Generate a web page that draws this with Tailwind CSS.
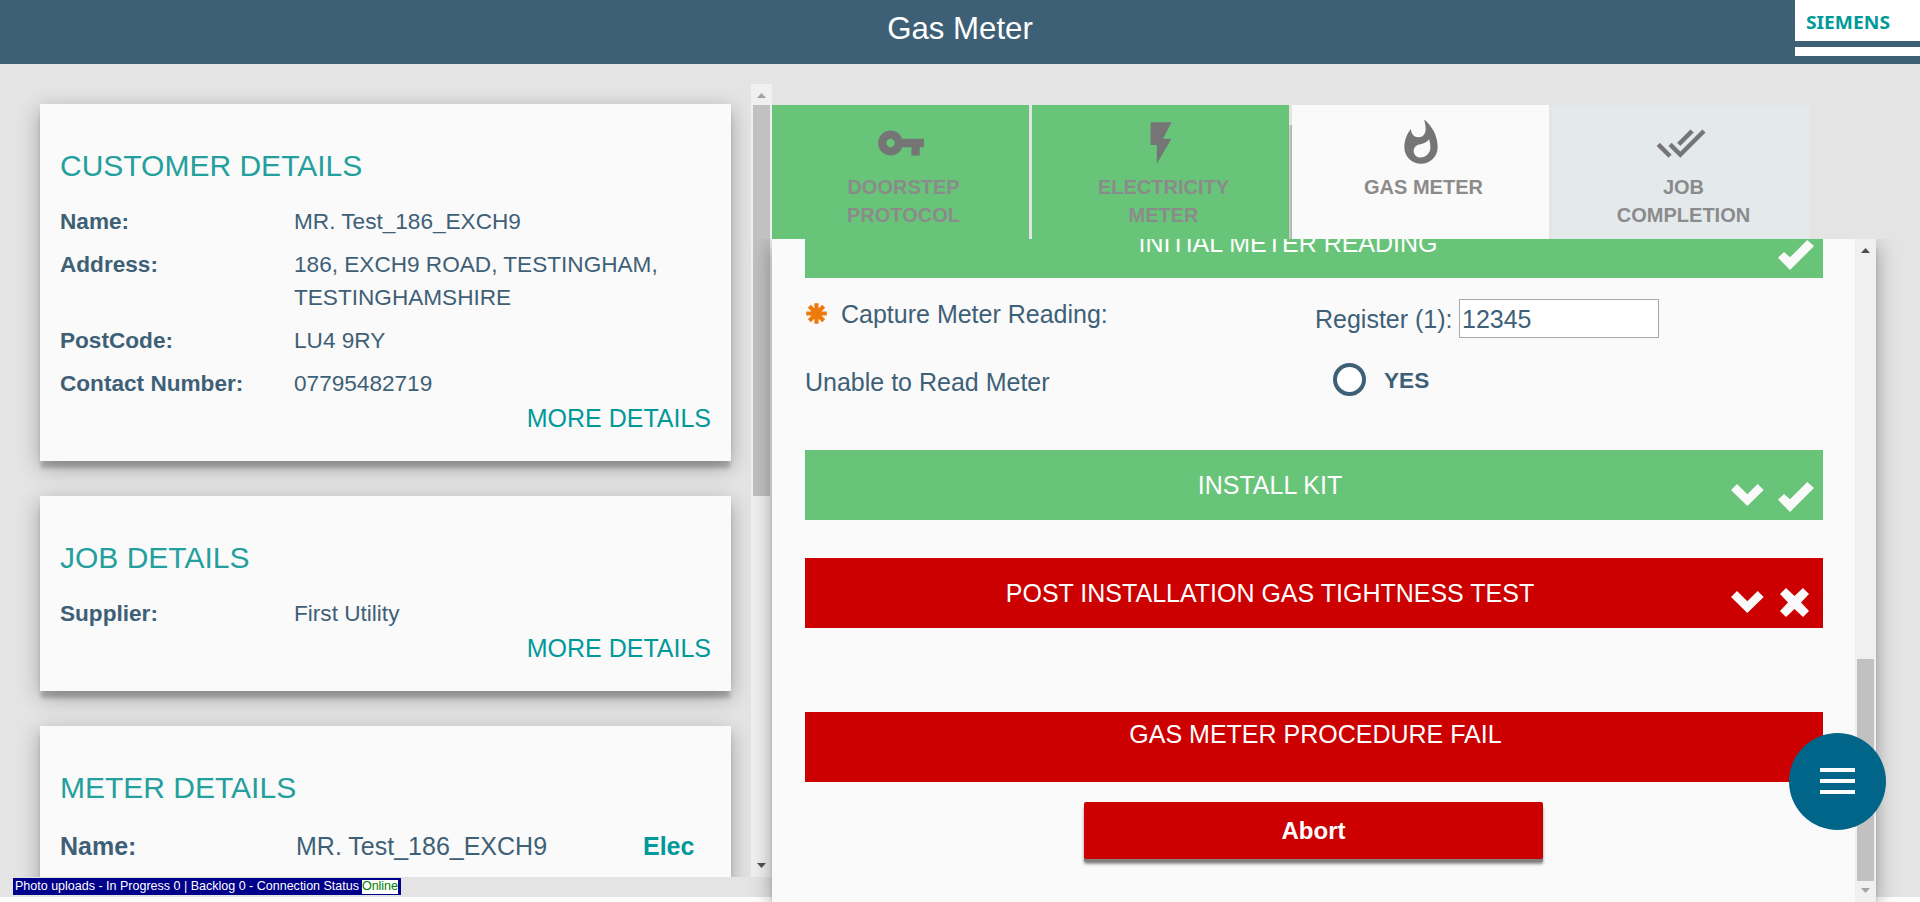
<!DOCTYPE html>
<html lang="en">
<head>
<meta charset="utf-8">
<title>Gas Meter</title>
<script src="https://cdn.jsdelivr.net/npm/@tailwindcss/browser@4"></script>
</head>
<body class="bg-white">
<svg class="hidden">
  <symbol id="check" viewBox="0 0 36 30"><path fill="#fafafa" d="M0 17.7 6 12l6 5.3L29.3 0 36 6 12 30z"/></symbol>
  <symbol id="chevron" viewBox="0 0 33 22"><path fill="#fafafa" d="M0 6 6 0l10.3 10.3L26.7 0l6 6-16.4 16z"/></symbol>
  <symbol id="cross" viewBox="0 0 29 29"><path fill="#fafafa" d="M0 6 6 0l8.500 8L23 0l6 6-8 8.500L29 23l-6 6-8.500-8L6 29l-6-6 8-8.500z"/></symbol>
</svg>
<div class="relative flex h-[902px] w-[1920px] flex-col overflow-hidden font-['Liberation_Sans',Arial,sans-serif] text-[25px] leading-9 text-[#3e6077]">
  <header class="relative h-16 shrink-0 bg-[#3e6077] pt-[6px] text-center text-[31.2px] leading-[46px] text-white">
    Gas Meter
    <div class="absolute top-0 right-0 flex h-14 w-[125px] flex-col bg-white">
      <svg class="h-[41px] w-[125px]" viewBox="0 0 125 41"><text x="11" y="28.5" textLength="84" lengthAdjust="spacingAndGlyphs" font-family="Noto Sans, sans-serif" font-weight="700" font-size="18" fill="#099">SIEMENS</text></svg>
      <div class="h-[6px] bg-[#3e6077]"></div>
    </div>
  </header>

  <main class="flex h-[833px] shrink-0 bg-[#e4e4e4]">
    <div class="w-[772px] shrink-0 pt-5">
      <div class="flex h-[793px] overflow-hidden">
        <div class="flex w-[751px] flex-col gap-[35px] pt-5 pr-5 pl-10">
          <section class="h-[357px] shrink-0 bg-[#fafafa] px-5 pt-[43px] shadow-[0_8px_4px_-1px_rgba(0,0,0,0.2),0_6px_20px_rgba(0,0,0,0.3)]">
            <h2 class="mb-[22px] h-[37px] text-[30px] leading-[37px] text-[#23a09d]">CUSTOMER DETAILS</h2>
            <dl class="grid grid-cols-[234px_1fr] gap-y-[10.8px] text-[22.6px] leading-[32.4px]">
              <dt class="font-bold">Name:</dt><dd>MR. Test_186_EXCH9</dd>
              <dt class="font-bold">Address:</dt><dd>186, EXCH9 ROAD, TESTINGHAM,<br>TESTINGHAMSHIRE</dd>
              <dt class="font-bold">PostCode:</dt><dd>LU4 9RY</dd>
              <dt class="font-bold">Contact Number:</dt><dd>07795482719</dd>
            </dl>
            <div class="-mt-[0.6px] text-right text-[#099]">MORE DETAILS</div>
          </section>
          <section class="h-[195px] shrink-0 bg-[#fafafa] px-5 pt-[43px] shadow-[0_8px_4px_-1px_rgba(0,0,0,0.2),0_6px_20px_rgba(0,0,0,0.3)]">
            <h2 class="mb-[22px] h-[37px] text-[30px] leading-[37px] text-[#23a09d]">JOB DETAILS</h2>
            <dl class="grid grid-cols-[234px_1fr] text-[22.6px] leading-[32.4px]">
              <dt class="font-bold">Supplier:</dt><dd>First Utility</dd>
            </dl>
            <div class="text-right text-[#099]">MORE DETAILS</div>
          </section>
          <section class="h-[357px] shrink-0 bg-[#fafafa] px-5 pt-[43px] shadow-[0_8px_4px_-1px_rgba(0,0,0,0.2),0_6px_20px_rgba(0,0,0,0.3)]">
            <h2 class="mb-[22px] h-[37px] text-[30px] leading-[37px] text-[#23a09d]">METER DETAILS</h2>
            <div class="grid grid-cols-[236px_347px_1fr]">
              <b>Name:</b><span>MR. Test_186_EXCH9</span><b class="text-[#099]">Elec</b>
            </div>
          </section>
        </div>
        <div class="flex w-[21px] flex-col items-center bg-[#f0f0f0]">
          <svg class="h-[21px] w-[21px]" viewBox="0 0 21 21"><path fill="#a3a3a3" d="M6 14h9l-4.500-5z"/></svg>
          <div class="h-[391px] w-[17px] bg-[#c1c1c1]"></div>
          <svg class="mt-auto h-[21px] w-[21px]" viewBox="0 0 21 21"><path fill="#505050" d="M6 7h9l-4.500 5z"/></svg>
        </div>
      </div>
      <div class="mt-px ml-[13px] flex h-[17px] w-[388px] items-center bg-[#00008b] pl-[2px] text-[12.6px] leading-[17px] whitespace-nowrap text-white">
        <svg class="h-[17px] w-[347px]"><text x="0" y="12" textLength="344" lengthAdjust="spacingAndGlyphs" fill="#fff">Photo uploads - In Progress 0 | Backlog 0 - Connection Status</text></svg>
        <span class="h-[14px] w-[36px] bg-white text-[12.6px] leading-[13px] tracking-[-0.1px] text-[green]">Online</span>
      </div>
    </div>

    <div class="w-[1104px] shrink-0 pt-[41px]">
      <nav class="flex gap-[3px] text-[20px] leading-7 font-bold text-[#8b8b8b]">
        <div class="flex h-[134px] w-[257px] flex-col items-center bg-[#67c479] pt-[13px]">
          <svg class="h-[50px] w-[50px]" viewBox="0 0 24 24"><path fill="#757575" d="M12.650 10A5.990 5.990 0 0 0 7 6c-3.310 0-6 2.690-6 6s2.690 6 6 6a5.990 5.990 0 0 0 5.650-4H17v4h4v-4h2v-4H12.650zM7 14a2 2 0 1 1 0-4 2 2 0 0 1 0 4z"/></svg>
          <div class="mt-[5px] pl-[6px] text-center">DOORSTEP<br>PROTOCOL</div>
        </div>
        <div class="flex h-[134px] w-[257px] flex-col items-center bg-[#67c479] pt-[13px]">
          <svg class="h-[50px] w-[50px]" viewBox="0 0 24 24"><path fill="#757575" d="M7 2v11h3v9l7-12h-4l4-8z"/></svg>
          <div class="mt-[5px] pl-[6px] text-center">ELECTRICITY<br>METER</div>
        </div>
        <div class="relative flex h-[134px] w-[257px] flex-col items-center bg-[#fafafa] pt-[13px]">
          <div class="absolute top-5 bottom-0 -left-[4px] w-[4px] bg-linear-to-l from-black/25 to-transparent"></div>
          <svg class="h-[50px] w-[50px]" viewBox="0 0 24 24"><path fill="#757575" d="M13.500.67s.74 2.650.74 4.800c0 2.060-1.350 3.730-3.410 3.730-2.070 0-3.630-1.670-3.630-3.730l.03-.36C5.210 7.510 4 10.620 4 14c0 4.420 3.580 8 8 8s8-3.580 8-8C20 8.610 17.410 3.800 13.500.67zM11.710 19c-1.780 0-3.220-1.400-3.220-3.140 0-1.620 1.050-2.760 2.810-3.120 1.770-.36 3.600-1.210 4.620-2.580.39 1.290.59 2.650.59 4.040 0 2.650-2.150 4.800-4.800 4.800z"/></svg>
          <div class="mt-[5px] pl-[6px] text-center">GAS METER</div>
        </div>
        <div class="flex h-[134px] w-[257px] flex-col items-center bg-[#e4eaec] pt-[13px]">
          <svg class="h-[50px] w-[50px]" viewBox="0 0 24 24"><path fill="#757575" stroke="#757575" stroke-width=".2" d="M18 7l-1.410-1.410-6.340 6.340 1.410 1.410L18 7zm4.240-1.410L11.660 16.170 7.480 12l-1.410 1.410L11.660 19l12-12-1.420-1.410zM.41 13.410L6 19l1.410-1.410L1.830 12 .41 13.410z"/></svg>
          <div class="mt-[5px] pl-[6px] text-center">JOB<br>COMPLETION</div>
        </div>
      </nav>

      <div class="h-[663px] [clip-path:inset(0_-30px_0_-30px)]">
      <div class="flex h-[663px] bg-[#fafafa] shadow-[0_8px_4px_-1px_rgba(0,0,0,0.2),0_6px_20px_rgba(0,0,0,0.35)]">
        <div class="h-[663px] w-[1083px] overflow-hidden pr-8 pl-[33px]">
          <div class="-mt-[31px] flex h-[70px] bg-[#67c479] text-white">
            <div class="flex-1 pt-[17px] text-center">INITIAL METER READING</div>
            <div class="w-[52px] pt-8 pl-[7px]"><svg class="h-[30px] w-9"><use href="#check"/></svg></div>
          </div>
          <div class="flex h-[75px]">
            <div class="flex w-[510px] pt-[18px]">
              <svg class="mt-[7px] mr-[14px] ml-px h-[21px] w-[21px]" viewBox="-10.500 -10.500 21 21"><path stroke="#ee7a0c" stroke-width="4.200" d="M0-10.300v20.600M-10.300 0h20.600M-7.200-7.200 7.200 7.200M7.200-7.200-7.200 7.200"/></svg>
              <span>Capture Meter Reading:</span>
            </div>
            <div class="flex pt-[21px]">
              <span class="mt-[2px] w-[144px]">Register (1):</span>
              <input value="12345" class="h-[39px] w-[200px] border border-[#a9a9a9] bg-white pt-[2px] pl-[2px] leading-[33px]">
            </div>
          </div>
          <div class="flex h-[97px]">
            <div class="w-[528px] pt-[11px]">Unable to Read Meter</div>
            <div class="mt-[10px] mr-[18px] h-[33px] w-[33px] rounded-full border-4 border-[#3e6077] bg-white"></div>
            <b class="pt-[10px] text-[22.6px]">YES</b>
          </div>
          <div class="flex h-[70px] bg-[#67c479] text-white">
            <div class="flex-1 pt-[17px] text-center">INSTALL KIT</div>
            <div class="flex w-[88px] pt-8">
              <svg class="mt-[2px] mr-[14px] -ml-1 h-[22px] w-[33px] shrink-0"><use href="#chevron"/></svg>
              <svg class="h-[30px] w-9 shrink-0"><use href="#check"/></svg>
            </div>
          </div>
          <div class="mt-[38px] flex h-[70px] bg-[#cc0000] text-white">
            <div class="flex-1 pt-[17px] text-center">POST INSTALLATION GAS TIGHTNESS TEST</div>
            <div class="flex w-[88px] pt-[30px]">
              <svg class="mt-[3px] mr-4 -ml-1 h-[22px] w-[33px] shrink-0"><use href="#chevron"/></svg>
              <svg class="h-[29px] w-[29px] shrink-0"><use href="#cross"/></svg>
            </div>
          </div>
          <div class="mt-[84px] h-[70px] bg-[#cc0000] pt-1 pl-[3px] text-center text-white">GAS METER PROCEDURE FAIL</div>
          <button class="mt-5 ml-[279px] block h-[57px] w-[459px] rounded-[2px] bg-[#cc0000] text-[24px] font-bold text-white shadow-[0_3px_0_#808080,0_5px_3px_rgba(0,0,0,0.45)]">Abort</button>
        </div>
        <div class="flex w-[21px] flex-col items-center bg-[#f0f0f0]">
          <svg class="h-[21px] w-[21px]" viewBox="0 0 21 21"><path fill="#505050" d="M6 14h9l-4.500-5z"/></svg>
          <div class="mt-[399px] h-[222px] w-[17px] bg-[#c1c1c1]"></div>
          <svg class="h-[21px] w-[21px]" viewBox="0 0 21 21"><path fill="#a3a3a3" d="M6 7h9l-4.500 5z"/></svg>
        </div>
      </div>
      </div>
    </div>
  </main>

  <button class="absolute top-[732.5px] left-[1788.5px] flex h-[97px] w-[97px] flex-col items-center gap-[7px] rounded-full bg-[#006588] pt-[35px]">
    <span class="h-[4px] w-[35px] bg-white"></span>
    <span class="h-[4px] w-[35px] bg-white"></span>
    <span class="h-[4px] w-[35px] bg-white"></span>
  </button>
</div>
</body>
</html>
